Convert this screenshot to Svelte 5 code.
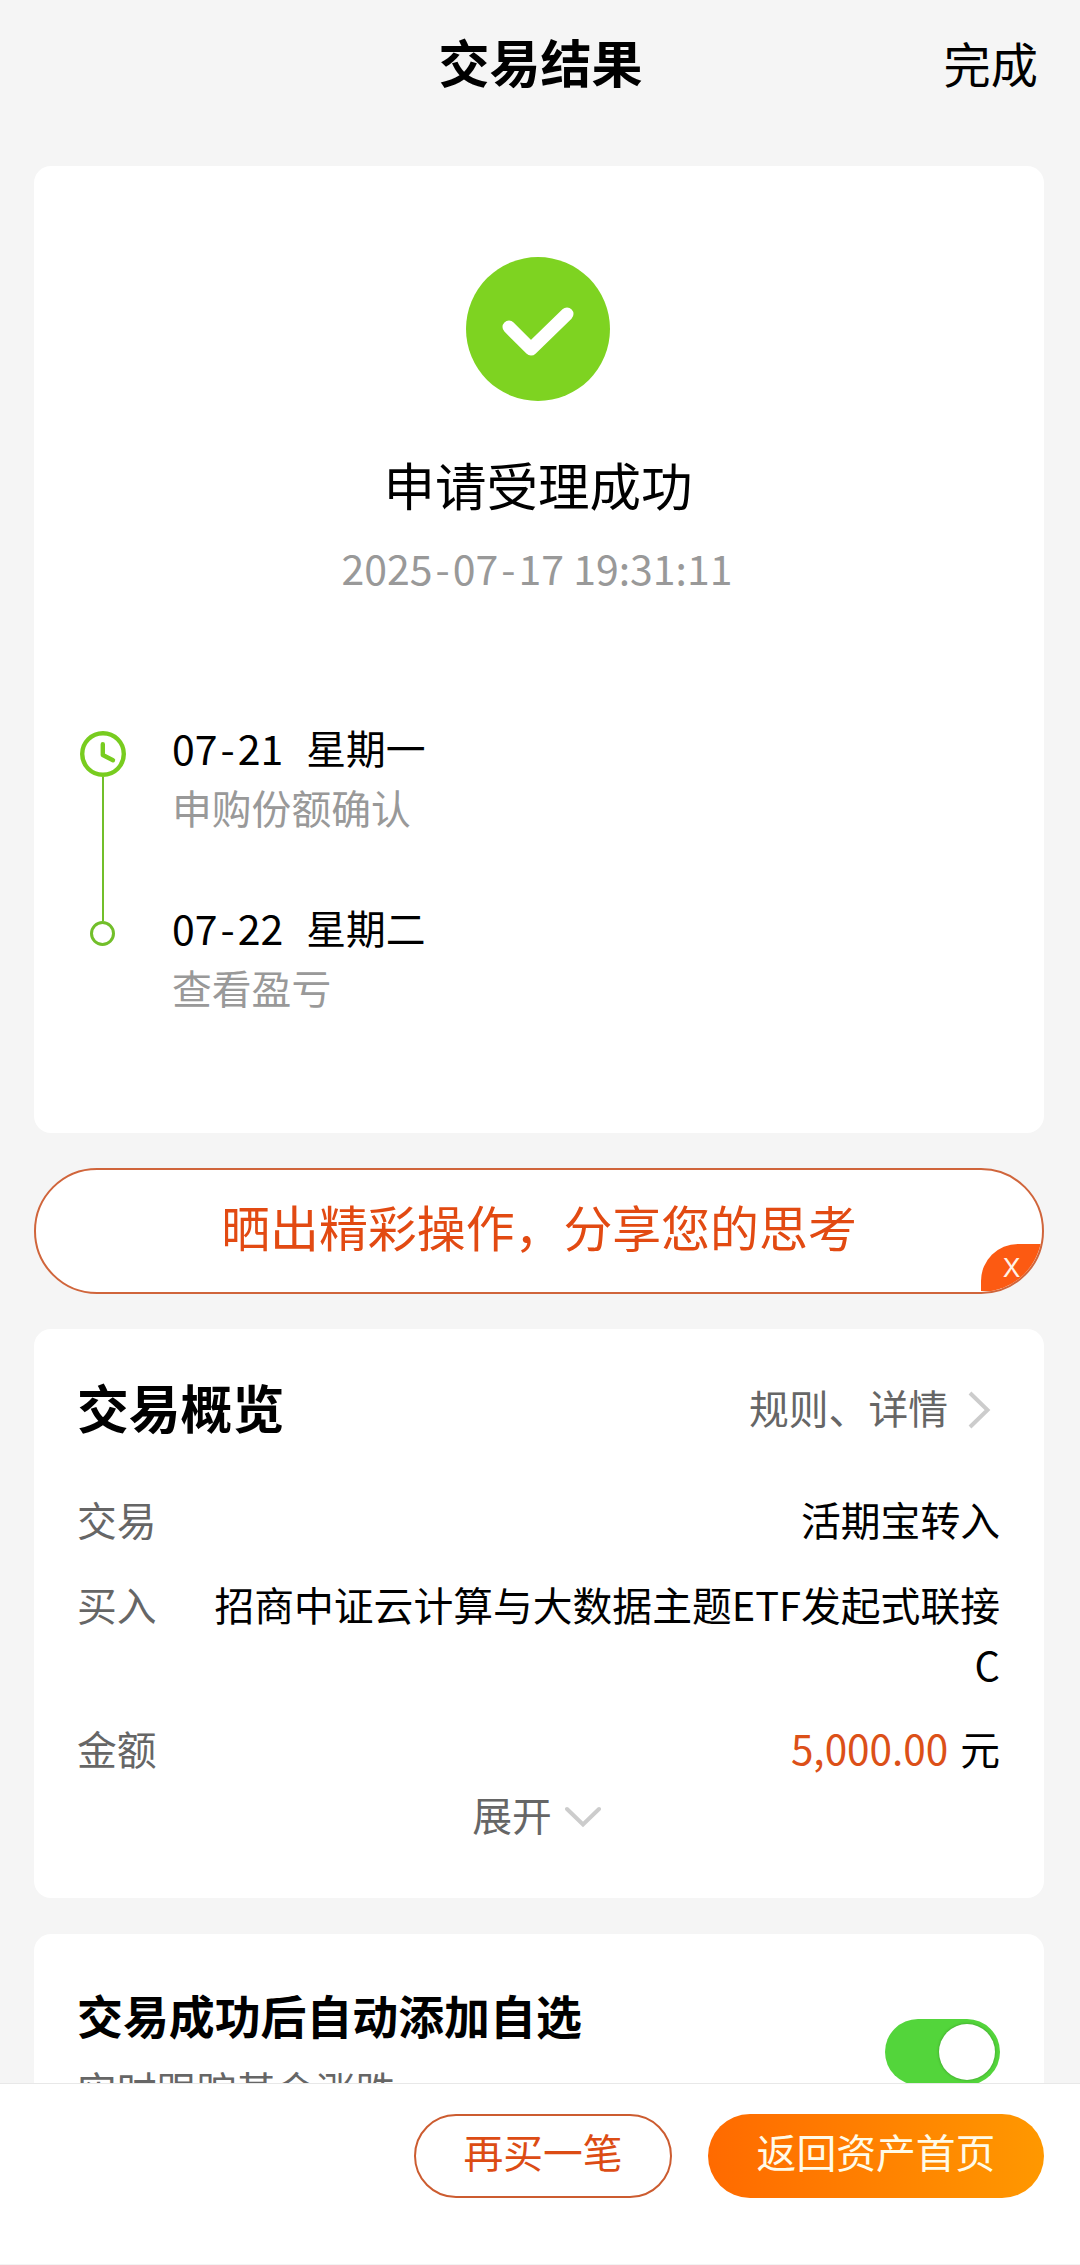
<script lang="ts">
  type Step = { date: string; weekday: string; note: string };

  const appliedAt = '2025-07-17 19:31:11';

  const steps: Step[] = [
    { date: '07-21', weekday: '星期一', note: '申购份额确认' },
    { date: '07-22', weekday: '星期二', note: '查看盈亏' }
  ];

  let showShare = $state(true);
  let autoAdd = $state(true);
</script>

{#snippet dashed(text: string)}
  {#each text.split('-') as part, i}{#if i > 0}<span class="dash">-</span>{/if}{part}{/each}
{/snippet}

<div class="page">
  <header class="topbar">
    <span></span>
    <h1>交易结果</h1>
    <button class="done">完成</button>
  </header>

  <main>
    <section class="card result">
      <svg class="check" viewBox="0 0 144 144">
        <circle cx="72" cy="72" r="72" fill="#7ed321" />
        <path d="M43 70 L65 92 L101 57" fill="none" stroke="#fff" stroke-width="13" stroke-linecap="round" stroke-linejoin="round" />
      </svg>
      <p class="status">申请受理成功</p>
      <p class="time">{@render dashed(appliedAt)}</p>

      <ol class="timeline">
        {#each steps as step, i}
          <li>
            <div class="rail">
              {#if i === 0}
                <svg class="clock" viewBox="0 0 46 46" fill="none" stroke="#78cc1f" stroke-width="4.4">
                  <circle cx="23" cy="23" r="20.8" />
                  <path d="M22.8 13.2 V24 L33 29.2" stroke-linecap="round" stroke-linejoin="round" />
                </svg>
                <i class="line"></i>
              {:else}
                <i class="dot"></i>
              {/if}
            </div>
            <div>
              <div class="when">
                <span class="date">{@render dashed(step.date)}</span>
                <span>{step.weekday}</span>
              </div>
              <div class="note">{step.note}</div>
            </div>
          </li>
        {/each}
      </ol>
    </section>

    {#if showShare}
      <div class="share">
        <span>晒出精彩操作，分享您的思考</span>
        <button class="close" onclick={() => (showShare = false)}>X</button>
      </div>
    {/if}

    <section class="card overview">
      <div class="overview-head">
        <h2>交易概览</h2>
        <a class="rules" href="#rules">
          规则、详情
          <svg width="24" height="40" viewBox="0 0 24 40" fill="none" stroke="#ccc" stroke-width="4">
            <path d="M2 3 L19.5 20 L2 37" />
          </svg>
        </a>
      </div>

      <dl>
        <div class="row">
          <dt>交易</dt>
          <dd>活期宝转入</dd>
        </div>
        <div class="row">
          <dt>买入</dt>
          <dd>招商中证云计算与大数据主题ETF发起式联接C</dd>
        </div>
        <div class="row">
          <dt>金额</dt>
          <dd><span class="amount">5,000.00</span> 元</dd>
        </div>
      </dl>

      <button class="expand">
        展开
        <svg width="36" height="22" viewBox="0 0 36 22" fill="none" stroke="#ccc" stroke-width="4">
          <path d="M2 3 L18 18.5 L34 3" stroke-linecap="round" />
        </svg>
      </button>
    </section>

    <section class="card auto">
      <div>
        <h3>交易成功后自动添加自选</h3>
        <p>实时跟踪基金涨跌</p>
      </div>
      <button class="switch" class:on={autoAdd} aria-label="自动添加自选" onclick={() => (autoAdd = !autoAdd)}>
        <i></i>
      </button>
    </section>
  </main>

  <footer>
    <button class="again">再买一笔</button>
    <button class="home">返回资产首页</button>
  </footer>
</div>

<style>
  :global(body) {
    background: #f5f5f5;
  }

  .page {
    display: flex;
    flex-direction: column;
    width: 1080px;
    height: 2265px;
    overflow: hidden;
    background: #f5f5f5;
    color: #000;
    font-family: 'Noto Sans CJK SC', sans-serif;
    font-size: 39.8px;
    line-height: 60px;
  }

  h1, h2, h3, p, ol, dl, dd {
    margin: 0;
    padding: 0;
  }

  button {
    padding: 0;
    border: none;
    background: none;
    color: inherit;
    font: inherit;
    white-space: nowrap;
  }

  .topbar {
    display: grid;
    grid-template-columns: 1fr auto 1fr;
    align-items: center;
    flex-shrink: 0;
    height: 122px;
    padding: 0 42px 0 43px;
  }

  .topbar h1 {
    font-size: 51px;
    font-weight: 700;
  }

  .done {
    justify-self: end;
    padding-top: 3px;
    font-size: 47.2px;
  }

  main {
    flex: 1;
    min-height: 0;
    overflow: hidden;
    padding: 44px 36px 0 34px;
  }

  .card {
    border-radius: 17px;
    background: #fff;
  }

  .result {
    display: flex;
    flex-direction: column;
    align-items: center;
    height: 967px;
    padding: 91px 46px 0 44px;
    box-sizing: border-box;
  }

  .check {
    flex-shrink: 0;
    width: 144px;
    height: 144px;
  }

  .status {
    margin-top: 53px;
    font-size: 51.5px;
  }

  .time {
    margin-top: 25px;
    padding-right: 2px;
    color: #999;
    font-size: 41px;
    line-height: 56px;
  }

  .dash {
    padding: 0 3px;
  }

  .timeline {
    align-self: stretch;
    margin-top: 122px;
    list-style: none;
  }

  .timeline li {
    display: flex;
    gap: 45px;
    height: 180px;
  }

  .rail {
    display: flex;
    flex-direction: column;
    align-items: center;
    width: 49px;
    padding-top: 14px;
  }

  .clock {
    flex-shrink: 0;
    width: 46px;
    height: 46px;
  }

  .line {
    flex-shrink: 0;
    width: 2px;
    height: 144px;
    background: #72bf2a;
  }

  .dot {
    width: 19px;
    height: 19px;
    margin-top: 10px;
    border: 3px solid #72bf2a;
    border-radius: 50%;
  }

  .when {
    display: flex;
    gap: 23px;
  }

  .date {
    font-size: 41px;
  }

  .note {
    color: #999;
  }

  .share {
    position: relative;
    display: flex;
    align-items: center;
    justify-content: center;
    height: 126px;
    margin: 35px 0;
    padding-bottom: 11px;
    box-sizing: border-box;
    overflow: hidden;
    border: 2px solid #d0653b;
    border-radius: 63px;
    background: #fff;
    color: #e24a12;
    font-size: 48.9px;
  }

  .close {
    position: absolute;
    right: 0;
    bottom: 1px;
    width: 61px;
    height: 47px;
    border-radius: 37px 0 0 0;
    background: #fc5a12;
    color: #fff3e6;
    font-family: Inter, sans-serif;
    font-size: 26px;
    line-height: 46px;
  }

  .overview {
    height: 569px;
    padding: 48px 44px 0 43px;
    box-sizing: border-box;
  }

  .overview-head {
    display: flex;
    align-items: center;
    justify-content: space-between;
    margin-bottom: 52px;
  }

  h2 {
    font-size: 51.8px;
    font-weight: 700;
  }

  .rules {
    display: flex;
    align-items: center;
    gap: 20px;
    padding-right: 8px;
    color: #666;
    text-decoration: none;
  }

  .rules svg {
    margin-top: 6px;
  }

  .row {
    display: flex;
    gap: 40px;
    margin-bottom: 24.5px;
  }

  dt {
    flex-shrink: 0;
    color: #666;
  }

  dd {
    flex: 1;
    text-align: right;
  }

  .amount {
    margin-right: 3px;
    color: #dc5018;
    font-size: 40.5px;
  }

  .expand {
    display: flex;
    align-items: center;
    gap: 13px;
    margin: -19px auto 0;
    padding-right: 4px;
    color: #666;
  }

  .expand svg {
    margin-top: 6px;
  }

  .auto {
    display: flex;
    justify-content: space-between;
    height: 250px;
    margin-top: 36px;
    padding: 50px 44px 0 43px;
    box-sizing: border-box;
  }

  h3 {
    font-size: 45.9px;
    font-weight: 700;
  }

  .auto p {
    margin-top: 15px;
    color: #666;
  }

  .switch {
    display: flex;
    width: 115px;
    height: 66px;
    margin-top: 35px;
    padding: 5px;
    box-sizing: border-box;
    border-radius: 33px;
    background: #ddd;
  }

  .switch.on {
    justify-content: flex-end;
    background: #53d53b;
  }

  .switch i {
    width: 56px;
    height: 56px;
    border-radius: 50%;
    background: #fff;
    box-shadow: 0 0 3px rgba(0, 0, 0, 0.3);
  }

  footer {
    display: flex;
    justify-content: flex-end;
    gap: 36px;
    flex-shrink: 0;
    height: 182px;
    padding: 30px 36px 0;
    box-sizing: border-box;
    border-top: 1px solid #e8e8e8;
    border-bottom: 1px solid #f3f3f3;
    background: #fff;
  }

  footer button {
    height: 84px;
    padding-bottom: 10px;
    box-sizing: border-box;
    border-radius: 42px;
  }

  .again {
    width: 258px;
    border: 2px solid #cc5c30;
    color: #dc4c14;
  }

  .home {
    width: 336px;
    background: linear-gradient(90deg, #ff6a00, #ff9800);
    color: #fffbe8;
  }
</style>
